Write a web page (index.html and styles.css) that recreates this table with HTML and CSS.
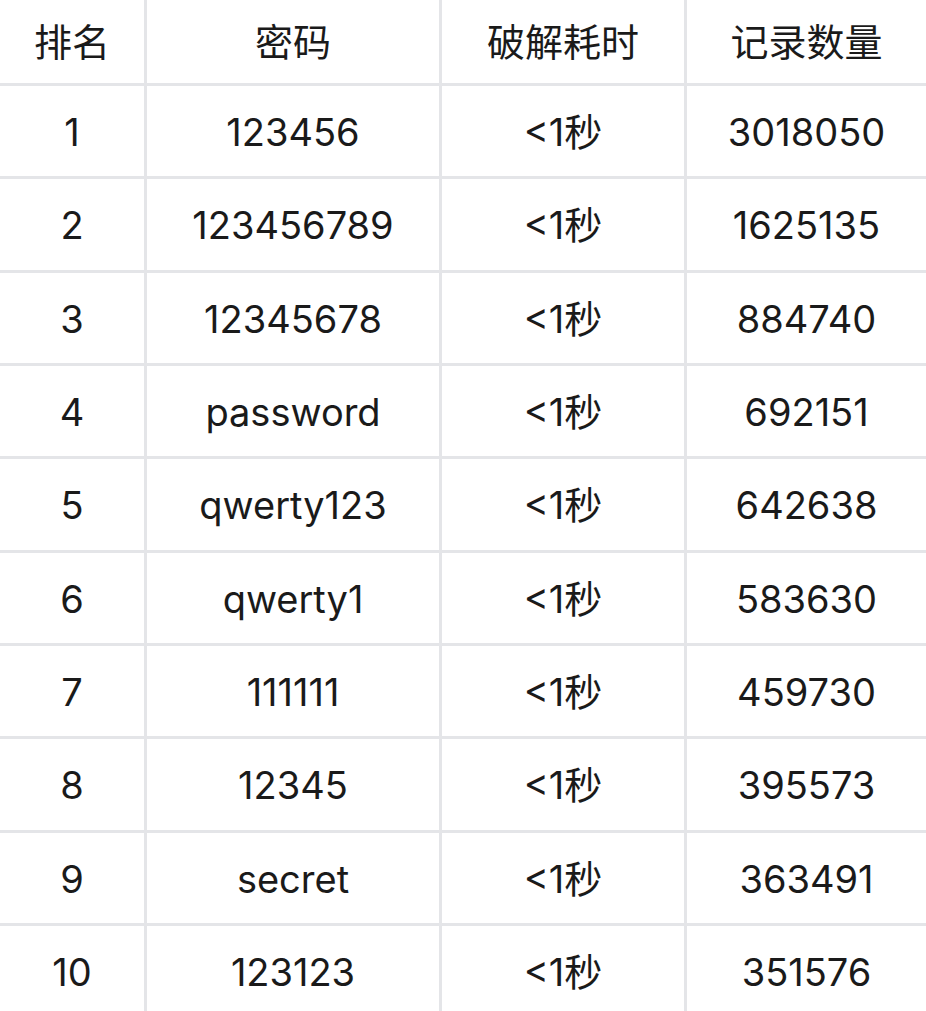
FILE: index.html
```html
<!DOCTYPE html>
<html lang="zh-CN">
<head>
<meta charset="utf-8">
<title>常见密码排行</title>
<link rel="stylesheet" href="styles.css">
</head>
<body>
<div class="table" role="table">
  <div class="cell head">排名</div>
  <div class="cell head">密码</div>
  <div class="cell head">破解耗时</div>
  <div class="cell head">记录数量</div>

  <div class="cell">1</div><div class="cell">123456</div><div class="cell">&lt;1秒</div><div class="cell">3018050</div>
  <div class="cell">2</div><div class="cell">123456789</div><div class="cell">&lt;1秒</div><div class="cell">1625135</div>
  <div class="cell">3</div><div class="cell">12345678</div><div class="cell">&lt;1秒</div><div class="cell">884740</div>
  <div class="cell">4</div><div class="cell">password</div><div class="cell">&lt;1秒</div><div class="cell">692151</div>
  <div class="cell">5</div><div class="cell">qwerty123</div><div class="cell">&lt;1秒</div><div class="cell">642638</div>
  <div class="cell">6</div><div class="cell">qwerty1</div><div class="cell">&lt;1秒</div><div class="cell">583630</div>
  <div class="cell">7</div><div class="cell">111111</div><div class="cell">&lt;1秒</div><div class="cell">459730</div>
  <div class="cell">8</div><div class="cell">12345</div><div class="cell">&lt;1秒</div><div class="cell">395573</div>
  <div class="cell">9</div><div class="cell">secret</div><div class="cell">&lt;1秒</div><div class="cell">363491</div>
  <div class="cell">10</div><div class="cell">123123</div><div class="cell">&lt;1秒</div><div class="cell">351576</div>
</div>
</body>
</html>
```
FILE: styles.css
```css
html, body {
  margin: 0;
  padding: 0;
  background: #ffffff;
}

body {
  font-family: Inter, "Noto Sans CJK SC", sans-serif;
  color: #1a1a1a;
}

.table {
  display: grid;
  grid-template-columns: 144px 292px 242px 1fr;
  grid-template-rows: 83px;
  grid-auto-rows: 90.333px;
  gap: 3px;
  background: #e4e5e8;
  width: 926px;
}

.cell {
  background: #ffffff;
  display: flex;
  align-items: center;
  justify-content: center;
  font-size: 38px;
  line-height: 1;
  padding-top: 2px;
  box-sizing: border-box;
}

.head {
  font-size: 38px;
  padding-top: 0;
}
```
